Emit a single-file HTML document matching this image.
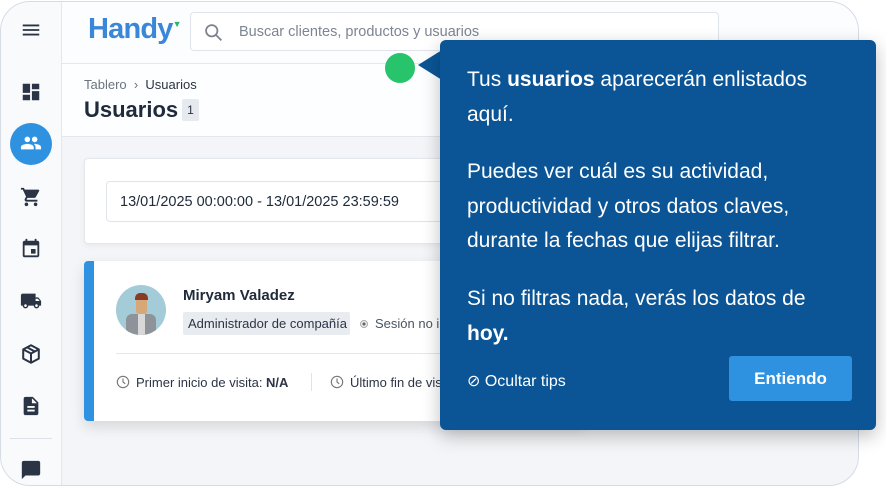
<!DOCTYPE html>
<html><head><meta charset="utf-8"><style>
*{margin:0;padding:0;box-sizing:border-box}
body{width:886px;height:487px;background:#fff;font-family:"Liberation Sans",sans-serif;position:relative;overflow:hidden}
.frame{position:absolute;left:0;top:1px;width:859px;height:485px;border:1.5px solid #d5dce6;border-radius:30px;background:#f3f5f8;overflow:hidden}
.side{position:absolute;left:0;top:0;width:61px;height:100%;background:#f9fafc;border-right:1px solid #e3e7ee}
.side svg{position:absolute;left:19px;width:22px;height:22px;fill:#2b3444}
.hdr{position:absolute;left:61px;top:0;right:0;height:62px;background:#fcfdfe;border-bottom:1px solid #e3e7ee}
.sub{position:absolute;left:61px;top:62px;right:0;height:73px;background:#fdfeff;border-bottom:1px solid #e3e7ee}
.abs{position:absolute}
</style></head><body>
<div class="frame">
 <div class="side">
  <svg style="top:17px" viewBox="0 0 24 24"><path d="M3 18h18v-2H3v2zm0-5h18v-2H3v2zm0-7v2h18V6H3z"/></svg>
  <svg style="top:79px" viewBox="0 0 24 24"><path d="M3 13h8V3H3v10zm0 8h8v-6H3v6zm10 0h8V11h-8v10zm0-18v6h8V3h-8z"/></svg>
  <div class="abs" style="left:9px;top:121px;width:42px;height:42px;border-radius:50%;background:#2f92e0"></div>
  <svg style="top:130px;fill:#fff" viewBox="0 0 24 24"><path d="M16 11c1.66 0 2.99-1.34 2.99-3S17.66 5 16 5c-1.66 0-3 1.34-3 3s1.34 3 3 3zm-8 0c1.66 0 2.99-1.34 2.99-3S9.66 5 8 5C6.34 5 5 6.34 5 8s1.34 3 3 3zm0 2c-2.33 0-7 1.17-7 3.5V19h14v-2.5c0-2.33-4.67-3.5-7-3.5zm8 0c-.29 0-.62.02-.97.05 1.16.84 1.97 1.97 1.97 3.45V19h6v-2.5c0-2.33-4.670-3.5-7-3.5z"/></svg>
  <svg style="top:184px" viewBox="0 0 24 24"><path d="M7 18c-1.1 0-1.99.9-1.99 2S5.9 22 7 22s2-.9 2-2-.9-2-2-2zM1 2v2h2l3.6 7.59-1.350 2.45c-.16.28-.25.61-.25.96 0 1.1.9 2 2 2h12v-2H7.42c-.14 0-.25-.11-.25-.25l.03-.12.9-1.63h7.45c.75 0 1.41-.41 1.75-1.03l3.58-6.49A1 1 0 0020 4H5.21l-.94-2H1zm16 16c-1.1 0-1.99.9-1.99 2s.89 2 1.99 2 2-.9 2-2-.9-2-2-2z"/></svg>
  <svg style="top:236px" viewBox="0 0 24 24"><path d="M17 12h-5v5h5v-5zM16 1v2H8V1H6v2H5c-1.11 0-1.99.9-1.99 2L3 19a2 2 0 002 2h14c1.1 0 2-.9 2-2V5c0-1.1-.9-2-2-2h-1V1h-2zm3 18H5V8h14v11z"/></svg>
  <svg style="top:288px" viewBox="0 0 24 24"><path d="M20 8h-3V4H3c-1.1 0-2 .9-2 2v11h2c0 1.66 1.34 3 3 3s3-1.34 3-3h6c0 1.66 1.34 3 3 3s3-1.34 3-3h2v-5l-3-4zM6 18.5c-.83 0-1.5-.67-1.5-1.5s.67-1.5 1.5-1.5 1.5.67 1.5 1.5-.67 1.5-1.5 1.5zm13.5-9l1.96 2.5H17V9.5h2.5zm-1.5 9c-.83 0-1.5-.67-1.5-1.5s.67-1.5 1.5-1.5 1.5.67 1.5 1.5-.67 1.5-1.5 1.5z"/></svg>
  <svg style="top:341px;fill:none;stroke:#2b3444;stroke-width:2.2;stroke-linejoin:round" viewBox="0 0 24 24"><path d="M12 2.5l8.5 4.5v10L12 21.5 3.5 17V7z M3.5 7L12 11.5 20.5 7 M12 11.5v10 M7.8 4.8l8.4 4.5"/></svg>
  <svg style="top:393px" viewBox="0 0 24 24"><path d="M14 2H6c-1.1 0-2 .9-2 2v16c0 1.1.9 2 2 2h12c1.1 0 2-.9 2-2V8l-6-6zm2 16H8v-2h8v2zm0-4H8v-2h8v2zm-3-5V3.5L18.5 9H13z"/></svg>
  <div class="abs" style="left:9px;top:436px;width:42px;height:1px;background:#dde2ea"></div>
  <svg style="top:457px" viewBox="0 0 24 24"><path d="M20 2H4c-1.1 0-2 .9-2 2v18l4-4h14c1.1 0 2-.9 2-2V4c0-1.1-.9-2-2-2z"/></svg>
 </div>
 <div class="hdr">
  <div class="abs" style="left:26px;top:11px;font-size:29px;font-weight:bold;color:#3a86d8;letter-spacing:-0.8px">Handy<span style="font-size:9px;color:#2ab56b;vertical-align:top;position:relative;top:6px">▼</span></div>
  <div class="abs" style="left:128px;top:10px;width:529px;height:39px;border:1px solid #dfe4eb;border-radius:4px;background:#fff">
   <svg class="abs" style="left:12px;top:9px;width:21px;height:21px" viewBox="0 0 24 24" fill="none" stroke="#7a8390" stroke-width="2"><circle cx="10" cy="10" r="6.5"/><path d="M15 15l6 6"/></svg>
   <div class="abs" style="left:48px;top:11px;font-size:14.5px;color:#7c8591">Buscar clientes, productos y usuarios</div>
  </div>
 </div>
 <div class="sub">
  <div class="abs" style="left:22px;top:13px;font-size:13px;color:#6b7480">Tablero &nbsp;›&nbsp; <span style="color:#2b3444">Usuarios</span></div>
  <div class="abs" style="left:22px;top:33px;font-size:22px;font-weight:bold;color:#1f2a3a">Usuarios</div>
  <div class="abs" style="left:120px;top:35px;width:17px;height:22px;background:#e6e9ee;border-radius:2px;font-size:12px;text-align:center;line-height:22px;color:#2b3444">1</div>
 </div>
 <div class="abs" style="left:83px;top:156px;width:500px;height:86px;background:#fff;border:1px solid #e3e7ee;border-radius:4px;box-shadow:0 2px 6px rgba(0,0,0,.05)">
  <div class="abs" style="left:21px;top:22px;width:460px;height:41px;border:1px solid #dfe4eb;border-radius:4px"></div>
  <div class="abs" style="left:35px;top:35px;font-size:14.5px;color:#1f2a3a">13/01/2025 00:00:00 - 13/01/2025 23:59:59</div>
 </div>
 <div class="abs" style="left:83px;top:259px;width:500px;height:160px;background:#fff;border-radius:4px;box-shadow:0 6px 14px rgba(0,0,0,.12);overflow:hidden">
  <div class="abs" style="left:0;top:0;width:10px;height:100%;background:#2f92e0"></div>
  <div class="abs" style="left:32px;top:24px;width:50px;height:50px;border-radius:50%;background:#a3ccd8;overflow:hidden">
   <div class="abs" style="left:20px;top:12px;width:11px;height:17px;background:#d6a778;border-radius:3px"></div>
   <div class="abs" style="left:19px;top:8px;width:13px;height:7px;background:#8a3b23;border-radius:5px 5px 0 0"></div>
   <div class="abs" style="left:10px;top:29px;width:30px;height:25px;background:#8e9399;border-radius:6px 6px 0 0"></div>
   <div class="abs" style="left:22px;top:29px;width:7px;height:25px;background:#d8d8d8"></div>
  </div>
  <div class="abs" style="left:99px;top:26px;font-size:15px;font-weight:bold;color:#1f2a3a">Miryam Valadez</div>
  <div class="abs" style="left:99px;top:51px;width:167px;height:23px;background:#e8ebef;border-radius:2px;font-size:13px;color:#2b3444;line-height:23px;padding-left:5px;white-space:nowrap;overflow:hidden">Administrador de compañía</div>
  <div class="abs" style="left:276px;top:59px;width:8px;height:8px;border-radius:50%;border:1px solid #aaa;background:radial-gradient(#666 35%,#eee 40%)"></div>
  <div class="abs" style="left:291px;top:55px;font-size:13px;color:#4b5563;white-space:nowrap">Sesión no iniciada</div>
  <div class="abs" style="left:32px;top:92px;width:470px;height:1px;background:#e3e7ee"></div>
  <svg class="abs" style="left:32px;top:114px;width:14px;height:14px" viewBox="0 0 16 16" fill="none" stroke="#777" stroke-width="1.3"><circle cx="8" cy="8" r="6.5"/><path d="M8 4v4l2.5 2"/></svg>
  <div class="abs" style="left:52px;top:114px;font-size:13px;color:#2b3444">Primer inicio de visita: <b>N/A</b></div>
  <div class="abs" style="left:227px;top:112px;width:1px;height:18px;background:#e0e3e8"></div>
  <svg class="abs" style="left:246px;top:114px;width:14px;height:14px" viewBox="0 0 16 16" fill="none" stroke="#777" stroke-width="1.3"><circle cx="8" cy="8" r="6.5"/><path d="M8 4v4l2.5 2"/></svg>
  <div class="abs" style="left:266px;top:114px;font-size:13px;color:#2b3444;white-space:nowrap">Último fin de visita: <b>N/A</b></div>
 </div>
</div>
<div class="abs" style="left:385px;top:53px;width:30px;height:30px;border-radius:50%;background:#27c46b"></div>
<svg class="abs" style="left:416px;top:50px;width:26px;height:32px" viewBox="0 0 26 32"><path d="M26 0L2 15 26 30z" fill="#0b5596"/></svg>
<div class="abs" style="left:440px;top:40px;width:436px;height:390px;background:#0b5596;border-radius:6px;box-shadow:0 6px 18px rgba(0,0,0,.25);color:#fff;font-size:21px;line-height:34.5px">
 <div class="abs" style="left:27px;top:23px;width:360px">Tus <b>usuarios</b> aparecerán enlistados aquí.</div>
 <div class="abs" style="left:27px;top:115px;width:360px">Puedes ver cuál es su actividad, productividad y otros datos claves, durante la fechas que elijas filtrar.</div>
 <div class="abs" style="left:27px;top:242px;width:360px">Si no filtras nada, verás los datos de <b>hoy.</b></div>
 <div class="abs" style="left:27px;top:332px;font-size:16px;line-height:20px">⊘ Ocultar tips</div>
 <div class="abs" style="left:289px;top:316px;width:123px;height:45px;background:#2f92e0;border-radius:3px;font-size:17px;font-weight:bold;text-align:center;line-height:45px">Entiendo</div>
</div>
</body></html>
